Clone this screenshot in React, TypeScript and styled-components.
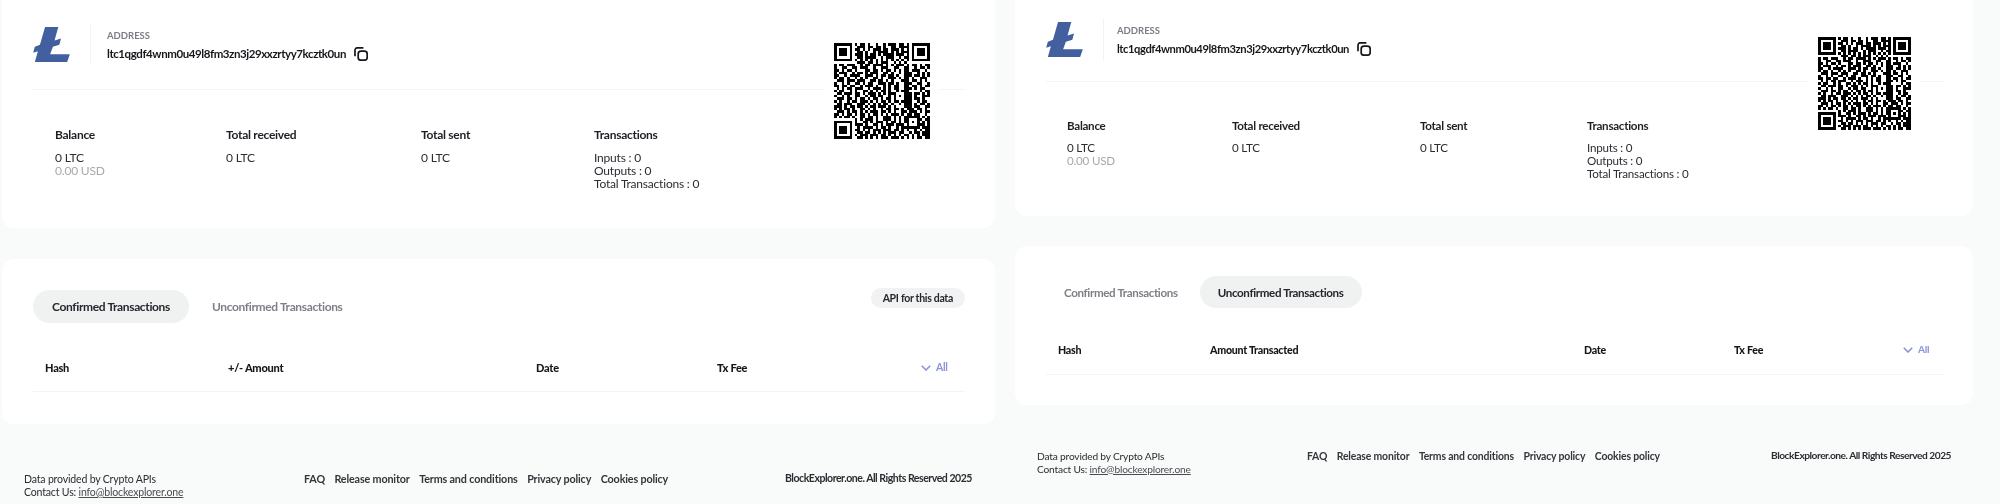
import React from 'react';
import styled, { createGlobalStyle } from 'styled-components';

const GlobalStyle = createGlobalStyle`
  html, body {
    margin: 0;
    padding: 0;
    background: #f9fafa;
  }
  body {
    font-family: "Lato", "Liberation Sans", sans-serif;
    color: #1c1f24;
  }
`;

const qrRows = [
  '#######.#.##.#..#..#.###.##.#.#######',
  '#.....#..###.##.##.#..##.####.#.....#',
  '#.###.#.##.#.#.###.##.###.#.#.#.###.#',
  '#.###.#..##.#..#.####.#.#.###.#.###.#',
  '#.###.#.###.#.##.#.####.###.#.#.###.#',
  '#.....#..##.####..#.###..#.##.#.....#',
  '#######.#.#.#.#.#.#.#.#.#.#.#.#######',
  '.........###.##.#.###..#.#.#.........',
  '#.##.###..#.##.####.#.#.###.#.##.#.##',
  '#..##..##.###..#..###..##..##..#.##.#',
  '##.#.##.#...##.##.#.##.#.#.##.###..#.',
  '#.###..#.##.#.###..##.#..#.###..#.#.#',
  '##..#.####..###.#.##.##.#..###.##.#.#',
  '#.##.#..#.#.#..##.#..###.#.##.#..###.',
  '.###.###.###..##.##.#.#...###.##.#.#.',
  '#..#.#..##.#.##..###.##.#..###..##..#',
  '##.##.##..#.###.#..#.#.##..##.##.#.##',
  '.#.#.##.###..#.###.#.#.##..###.#.##..',
  '#.##..#.#..##.#.#.##.#..#.###....#.##',
  '.##.###.##.#.###.#.#.###...###.##.#.#',
  '#..#.#..##..#.##.##..#.#.#.###.#..###',
  '.###.##.#.##.#.##.#.##.#...###.##.#..',
  '#.#..#.##.###.#.#.##.#.##.####..#.##.',
  '.##.###..###.#.#.#.##.#..#.###.#.##.#',
  '###.#.##.##.#.##.###.#.#...###.##..##',
  '#.#.##.#..##.#.#..#.##.##.#.###.##.#.',
  '.###.#.##.#.#.###.##.#.#..##.###.#.##',
  '##.#.##.#.##.#.##.#.#.###.#.##.##..#.',
  '#.#.##.#..##.##.#..###.#.#.######.#.#',
  '........#.#.###.#..###.#.#.##...##.##',
  '#######.#..##.#.###.#.##.#.##.#.#.#.#',
  '#.....#.###.#..##.#.###.###.#...###.#',
  '#.###.#..#.####.#.##.#..#.#######.###',
  '#.###.#.##.#.#.###.###.##.#.#..#.#.##',
  '#.###.#..##.##.#.#.#.###.##..#.##.###',
  '#.....#.#.###.###.##.#.#.#.##.#.#.###',
  '#######..##.#.#.#.###.###.#.#.#.##.##',
];

const qrPath = qrRows
  .map((row, y) =>
    row
      .split('')
      .map((c, x) => (c === '#' ? `M${x} ${y}h1v1h-1z` : ''))
      .join(''),
  )
  .join('');

type Spec = {
  width: number;
  font: number;
  addressFont: number;
  infoLeft: number;
  topHeight: number;
  headPad: number;
  headBottom: number;
  statsTop: number;
  statsGap: number;
  statCols: string;
  statsLeft: number;
  qrSize: number;
  qrTop: number;
  qrRight: number;
  gap: number;
  tableHeight: number;
  tabPad: number;
  tabHeight: number;
  tabInset: number;
  tableTop: number;
  rowHeight: number;
  tableCols: string;
  footerTop: number;
  footerLeft: number;
  footerCols: string;
  footerRight: number;
};

const leftSpec: Spec = {
  width: 993,
  font: 12,
  addressFont: 11.5,
  infoLeft: 16,
  topHeight: 228,
  headPad: 23,
  headBottom: 24,
  statsTop: 38,
  statsGap: 9,
  statCols: '171px 195px 173px 1fr',
  statsLeft: 22,
  qrSize: 96,
  qrTop: 33,
  qrRight: 55,
  gap: 31,
  tableHeight: 165,
  tabPad: 31,
  tabHeight: 33,
  tabInset: 19,
  tableTop: 20,
  rowHeight: 48,
  tableCols: '183px 308px 181px 204px 1fr',
  footerTop: 48,
  footerLeft: 22,
  footerCols: '280px 1fr auto',
  footerRight: 23,
};

const rightSpec: Spec = {
  width: 958,
  font: 11.6,
  addressFont: 11.2,
  infoLeft: 13,
  topHeight: 216,
  headPad: 18,
  headBottom: 21,
  statsTop: 37,
  statsGap: 8,
  statCols: '165px 188px 167px 1fr',
  statsLeft: 21,
  qrSize: 93,
  qrTop: 27,
  qrRight: 52,
  gap: 30,
  tableHeight: 159,
  tabPad: 30,
  tabHeight: 32,
  tabInset: 18,
  tableTop: 16,
  rowHeight: 50,
  tableCols: '152px 374px 150px 169px 1fr',
  footerTop: 45,
  footerLeft: 22,
  footerCols: '270px 1fr auto',
  footerRight: 22,
};

const Page = styled.div`
  display: flex;
  gap: 20px;
  width: 2000px;
  height: 504px;
  padding-left: 2px;
  box-sizing: border-box;
  overflow: hidden;
  background: #f9fafa;
  filter: blur(0.3px);
`;

const Column = styled.div<{ $width: number; $gap: number; $font: number }>`
  display: flex;
  flex-direction: column;
  flex: none;
  width: ${(p) => p.$width}px;
  font-size: ${(p) => p.$font}px;
  gap: ${(p) => p.$gap}px;
`;

const Card = styled.section<{ $height: number; $top?: number }>`
  position: relative;
  box-sizing: border-box;
  height: ${(p) => p.$height}px;
  padding: ${(p) => p.$top ?? 0}px 30px 0 31px;
  background: #fff;
  border-radius: 12px;
`;

const TopCard = styled(Card)`
  border-radius: 0 0 12px 12px;
`;

const AddressRow = styled.div<{ $pad: number; $bottom: number }>`
  display: flex;
  align-items: center;
  padding-top: ${(p) => p.$pad}px;
  padding-bottom: ${(p) => p.$bottom}px;
  border-bottom: 1px solid #f2f3f3;
`;

const LogoWrap = styled.div`
  display: flex;
  align-items: center;
  height: 42px;
  padding-right: 20px;
  border-right: 1px solid #f2f3f3;
`;

const AddressInfo = styled.div<{ $left: number }>`
  display: flex;
  flex-direction: column;
  gap: 5px;
  padding-top: 4px;
  padding-left: ${(p) => p.$left}px;
`;

const AddressLabel = styled.div`
  font-size: 9.5px;
  font-weight: 700;
  color: #7b7e85;
  line-height: 11px;
  text-transform: uppercase;
`;

const AddressValue = styled.div<{ $font: number }>`
  display: flex;
  align-items: center;
  gap: 8px;
  font-size: ${(p) => p.$font}px;
  font-weight: 700;
  letter-spacing: -0.42px;
  line-height: 16px;
  color: #15171b;
`;

const QrBox = styled.div<{ $top: number; $right: number }>`
  position: absolute;
  top: ${(p) => p.$top}px;
  right: ${(p) => p.$right}px;
  padding: 10px;
  background: #fff;
  line-height: 0;
`;

const Stats = styled.div<{ $cols: string; $top: number; $left: number }>`
  display: grid;
  grid-template-columns: ${(p) => p.$cols};
  margin-top: ${(p) => p.$top}px;
  padding-left: ${(p) => p.$left}px;
`;

const StatTitle = styled.div<{ $gap: number }>`
  font-weight: 700;
  letter-spacing: -0.27px;
  line-height: 14px;
  margin-bottom: ${(p) => p.$gap}px;
  color: #1c1f24;
`;

const StatLine = styled.div<{ $muted?: boolean }>`
  line-height: 13px;
  letter-spacing: -0.2px;
  color: ${(p) => (p.$muted ? '#a9a9a9' : '#2a2d32')};
`;

const TabBar = styled.div`
  display: flex;
  align-items: flex-start;
  justify-content: space-between;
`;

const Tabs = styled.div`
  display: flex;
  gap: 4px;
`;

const Tab = styled.div<{ $active?: boolean; $height: number; $inset: number }>`
  display: flex;
  align-items: center;
  height: ${(p) => p.$height}px;
  padding: 0 ${(p) => p.$inset}px;
  border-radius: 17px;
  font-weight: 700;
  letter-spacing: -0.36px;
  background: ${(p) => (p.$active ? '#f0f2f2' : 'transparent')};
  color: ${(p) => (p.$active ? '#24272c' : '#7d8087')};
`;

const ApiPill = styled.div`
  display: flex;
  align-items: center;
  height: 20px;
  margin-top: -2px;
  padding: 0 12px;
  border-radius: 10px;
  background: #f0f2f4;
  font-size: 10.5px;
  font-weight: 700;
  letter-spacing: -0.3px;
  color: #24272c;
`;

const TableHead = styled.div<{ $cols: string; $top: number; $height: number }>`
  display: grid;
  grid-template-columns: ${(p) => p.$cols};
  align-items: center;
  box-sizing: content-box;
  height: ${(p) => p.$height}px;
  margin-top: ${(p) => p.$top}px;
  padding-left: 12px;
  border-bottom: 1px solid #f2f3f3;
  font-size: 0.92em;
  font-weight: 900;
  letter-spacing: -0.27px;
  color: #15171b;
`;

const AllToggle = styled.div`
  display: flex;
  align-items: center;
  gap: 5px;
  font-size: 0.95em;
  color: #8c93d9;
  font-weight: 700;
`;

const ChevronSvg = styled.svg`
  margin-top: 2px;
`;

const Footer = styled.footer<{ $cols: string; $top: number; $left: number; $right: number }>`
  display: grid;
  grid-template-columns: ${(p) => p.$cols};
  align-items: start;
  margin-top: ${(p) => p.$top - 30}px;
  padding: 0 ${(p) => p.$right}px 0 ${(p) => p.$left}px;
  font-size: 0.88em;
  line-height: 12.5px;
  color: #2a2d32;
`;

const FooterNote = styled.div`
  letter-spacing: -0.18px;
`;

const FooterLink = styled.a`
  color: #4a4d52;
  text-decoration: underline;
`;

const Links = styled.nav`
  display: flex;
  gap: 9.5px;
  font-size: 1.02em;
  font-weight: 700;
  letter-spacing: -0.15px;
  color: #33363b;
`;

const Copyright = styled.div`
  font-weight: 700;
  letter-spacing: -0.48px;
  margin-top: -1px;
`;

const LitecoinLogo = () => (
  <svg width="37" height="35" viewBox="40 45 108 103">
    <path
      d="M75 45H114L103 85L122 79L117 97L98 103L90 125H148L140 148H45L54 116L40 121L45 103L60 97Z"
      fill="#42609f"
    />
  </svg>
);

const CopyIcon = () => (
  <svg width="14" height="14" viewBox="0 0 14 14" fill="none" stroke="#15171b" strokeWidth="1.7">
    <rect x="4.2" y="4.2" width="9" height="9" rx="2.8" />
    <path d="M1 9.2V3.2A2.4 2.4 0 0 1 3.4 .8H9.4" />
  </svg>
);

const ChevronIcon = () => (
  <ChevronSvg width="10" height="6" viewBox="0 0 10 6" fill="none" stroke="#8c93d9" strokeWidth="1.6">
    <path d="M.8 .8L5 5L9.2 .8" />
  </ChevronSvg>
);

const QrCode = ({ size }: { size: number }) => (
  <svg width={size} height={size} viewBox="0 0 37 37" shapeRendering="crispEdges">
    <path d={qrPath} fill="#000" />
  </svg>
);

const footerLinks = ['FAQ', 'Release monitor', 'Terms and conditions', 'Privacy policy', 'Cookies policy'];

const Panel = ({ spec, unconfirmed }: { spec: Spec; unconfirmed?: boolean }) => (
  <Column $width={spec.width} $gap={spec.gap} $font={spec.font}>
    <TopCard $height={spec.topHeight}>
      <AddressRow $pad={spec.headPad} $bottom={spec.headBottom}>
        <LogoWrap>
          <LitecoinLogo />
        </LogoWrap>
        <AddressInfo $left={spec.infoLeft}>
          <AddressLabel>Address</AddressLabel>
          <AddressValue $font={spec.addressFont}>
            ltc1qgdf4wnm0u49l8fm3zn3j29xxzrtyy7kcztk0un
            <CopyIcon />
          </AddressValue>
        </AddressInfo>
      </AddressRow>
      <QrBox $top={spec.qrTop} $right={spec.qrRight}>
        <QrCode size={spec.qrSize} />
      </QrBox>
      <Stats $cols={spec.statCols} $top={spec.statsTop} $left={spec.statsLeft}>
        <div>
          <StatTitle $gap={spec.statsGap}>Balance</StatTitle>
          <StatLine>0 LTC</StatLine>
          <StatLine $muted>0.00 USD</StatLine>
        </div>
        <div>
          <StatTitle $gap={spec.statsGap}>Total received</StatTitle>
          <StatLine>0 LTC</StatLine>
        </div>
        <div>
          <StatTitle $gap={spec.statsGap}>Total sent</StatTitle>
          <StatLine>0 LTC</StatLine>
        </div>
        <div>
          <StatTitle $gap={spec.statsGap}>Transactions</StatTitle>
          <StatLine>Inputs : 0</StatLine>
          <StatLine>Outputs : 0</StatLine>
          <StatLine>Total Transactions : 0</StatLine>
        </div>
      </Stats>
    </TopCard>
    <Card $height={spec.tableHeight} $top={spec.tabPad}>
      <TabBar>
        <Tabs>
          <Tab $active={!unconfirmed} $height={spec.tabHeight} $inset={spec.tabInset}>Confirmed Transactions</Tab>
          <Tab $active={unconfirmed} $height={spec.tabHeight} $inset={spec.tabInset}>Unconfirmed Transactions</Tab>
        </Tabs>
        {!unconfirmed && <ApiPill>API for this data</ApiPill>}
      </TabBar>
      <TableHead $cols={spec.tableCols} $top={spec.tableTop} $height={spec.rowHeight}>
        <div>Hash</div>
        <div>{unconfirmed ? 'Amount Transacted' : '+/- Amount'}</div>
        <div>Date</div>
        <div>Tx Fee</div>
        <AllToggle>
          <ChevronIcon />
          All
        </AllToggle>
      </TableHead>
    </Card>
    <Footer $cols={spec.footerCols} $top={spec.footerTop} $left={spec.footerLeft} $right={spec.footerRight}>
      <FooterNote>
        <div>Data provided by Crypto APIs</div>
        <div>
          Contact Us: <FooterLink>info@blockexplorer.one</FooterLink>
        </div>
      </FooterNote>
      <Links>
        {footerLinks.map((l) => (
          <span key={l}>{l}</span>
        ))}
      </Links>
      <Copyright>BlockExplorer.one. All Rights Reserved 2025</Copyright>
    </Footer>
  </Column>
);

export default function App() {
  return (
    <>
      <GlobalStyle />
      <Page>
        <Panel spec={leftSpec} />
        <Panel spec={rightSpec} unconfirmed />
      </Page>
    </>
  );
}
